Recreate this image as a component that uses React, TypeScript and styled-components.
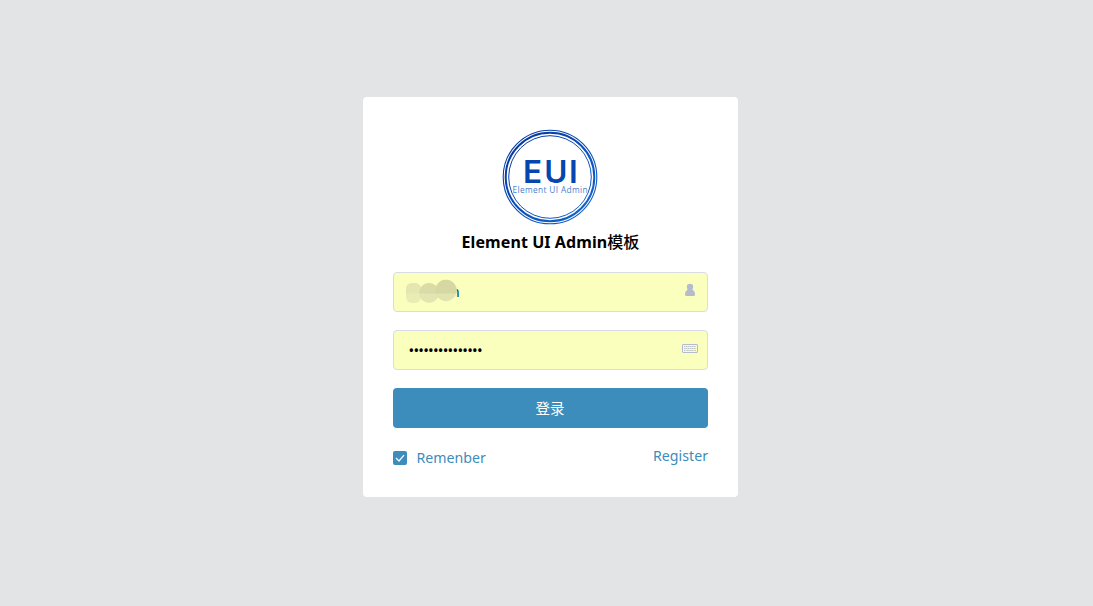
import * as React from 'react';
import styled, {createGlobalStyle} from 'styled-components';

const GlobalStyle = createGlobalStyle`
	* {
		box-sizing: border-box;
	}

	body {
		margin: 0;
		background: #e3e4e6;
		font-family: "Noto Sans", "Noto Sans CJK SC", sans-serif;
		font-size: 14px;
		color: #000;
	}
`;

const Page = styled.main`
	display: flex;
	justify-content: center;
	align-items: flex-start;
	min-height: 606px;
	padding: 97px 0 0 8px;
`;

const LoginCard = styled.form`
	display: flex;
	flex-direction: column;
	width: 375px;
	height: 400px;
	padding: 32px 30px 0;
	border-radius: 4px;
	background: #fff;
`;

const LogoImage = styled.svg`
	display: block;
	align-self: center;
	width: 96px;
	height: 96px;
	margin-right: 1px;
`;

const Title = styled.h1`
	margin: 5px 0 18px;
	font-size: 16px;
	font-weight: 700;
	line-height: 24px;
	letter-spacing: 0.08px;
	text-align: center;
	white-space: nowrap;

	& > span {
		font-weight: 500;
	}
`;

const Field = styled.label`
	display: flex;
	align-items: center;
	height: 40px;
	margin-bottom: 18px;
	padding: 0 9px 0 11px;
	border: 1px solid #d8dce5;
	border-radius: 4px;
	background: #faffbd;
`;

const Input = styled.input`
	flex: 1;
	min-width: 0;
	height: 38px;
	padding: 0 3.5px;
	border: 0;
	outline: 0;
	background: transparent;
	font: 15px "Noto Sans", sans-serif;
	letter-spacing: -0.75px;
	color: #000;
`;

const MaskedName = styled.div`
	display: flex;
	flex: 1;
	align-items: center;
`;

const MaskShape = styled.svg`
	position: relative;
	z-index: 1;
	width: 52px;
	height: 26px;
`;

const NameTail = styled.span`
	margin: -2px 0 0 -6px;
	color: #003c5a;
`;

const FieldIcon = styled.svg`
	flex: none;
	width: 16px;
	height: 16px;
	margin-bottom: 5px;
`;

const SubmitButton = styled.button`
	height: 40px;
	padding: 0 1px 2px 0;
	border: 0;
	border-radius: 4px;
	background: #3c8dbc;
	color: #fff;
	font: 400 14.5px "Noto Sans", "Noto Sans CJK SC", sans-serif;
`;

const Footer = styled.div`
	display: flex;
	justify-content: space-between;
	align-items: flex-start;
	margin-top: 18px;
	color: #3c8dbc;
	font-size: 14.2px;
	line-height: 20px;
`;

const Remember = styled.label`
	display: flex;
	align-items: center;
	gap: 9.5px;
	padding-top: 2px;
`;

const CheckBox = styled.span`
	display: flex;
	width: 14px;
	height: 14px;
	border-radius: 2px;
	background: #3c8dbc;
`;

const RegisterLink = styled.a`
	color: inherit;
	text-decoration: none;
`;

const Logo = () => (
	<LogoImage viewBox="0 0 96 96">
		<defs>
			<linearGradient id="ring" x1="0" y1="0" x2="1" y2="1">
				<stop offset="0" stopColor="#06329a" />
				<stop offset="1" stopColor="#1268d2" />
			</linearGradient>
		</defs>
		<g fill="none" stroke="url(#ring)">
			<circle cx="48" cy="48" r="46.8" strokeWidth="1.1" />
			<circle cx="48" cy="48" r="44.3" strokeWidth="2" />
			<circle cx="48" cy="48" r="41.3" strokeWidth="1" />
		</g>
		<text y="54" fontFamily="Inter, sans-serif" fontSize="31.5" fontWeight="600" fill="#0646ae">
			<tspan x="21">E</tspan>
			<tspan x="42.3">U</tspan>
			<tspan x="67">I</tspan>
		</text>
		<text x="10.5" y="63.5" fontFamily="Open Sans" fontSize="8.3" fill="#4a7fce" textLength="75">Element UI Admin</text>
	</LogoImage>
);

const UserIcon = () => (
	<FieldIcon viewBox="0 0 16 16" fill="#b4bccc">
		<circle cx="8" cy="5" r="3.2" />
		<path d="M3 12.5C3 9.5 4.3 8 6 7.4H10C11.7 8 13 9.5 13 12.5Q13 14 11.5 14H4.5Q3 14 3 12.5Z" />
	</FieldIcon>
);

const KeyboardIcon = () => (
	<FieldIcon viewBox="0 0 16 16" fill="none" stroke="#b4bccc">
		<rect x="0.5" y="4.5" width="15" height="8" rx="0.5" />
		<path d="M2 6.5H14M2 8.5H14M2 10.5H3.5M4.5 10.5H11.5M12.5 10.5H14" strokeWidth="0.9" strokeDasharray="1.5 0.4" />
	</FieldIcon>
);

// Smudge that hides all but the end of the account name
const NameMask = () => (
	<MaskShape viewBox="0 0 52 26">
		<defs>
			<clipPath id="upper">
				<rect width="52" height="14.5" />
			</clipPath>
		</defs>
		<rect x="1" y="4" width="15" height="20" rx="6" fill="#e9edb5" />
		<circle cx="24" cy="14" r="10" fill="#e3e6b0" />
		<circle cx="41" cy="11.5" r="10.7" fill="#e1e4af" />
		<g clipPath="url(#upper)">
			<rect x="1" y="4" width="15" height="20" rx="6" fill="#e4e7b0" />
			<circle cx="24" cy="14" r="10" fill="#d9dca7" />
			<circle cx="41" cy="11.5" r="10.7" fill="#d6d8a3" />
		</g>
	</MaskShape>
);

export default class App extends React.Component {
	render() {
		return (
			<Page>
				<GlobalStyle />
				<LoginCard>
					<Logo />
					<Title>Element UI Admin<span>模板</span></Title>
					<Field>
						<MaskedName><NameMask /><NameTail>n</NameTail></MaskedName>
						<UserIcon />
					</Field>
					<Field>
						<Input type="password" defaultValue="elementuiadmin1" />
						<KeyboardIcon />
					</Field>
					<SubmitButton type="button">登录</SubmitButton>
					<Footer>
						<Remember>
							<CheckBox>
								<svg width="14" height="14" fill="none" stroke="#fff" strokeWidth="1.2">
									<path d="M3 7L6 10L11 4.2" />
								</svg>
							</CheckBox>
							Remenber
						</Remember>
						<RegisterLink>Register</RegisterLink>
					</Footer>
				</LoginCard>
			</Page>
		);
	}
}
